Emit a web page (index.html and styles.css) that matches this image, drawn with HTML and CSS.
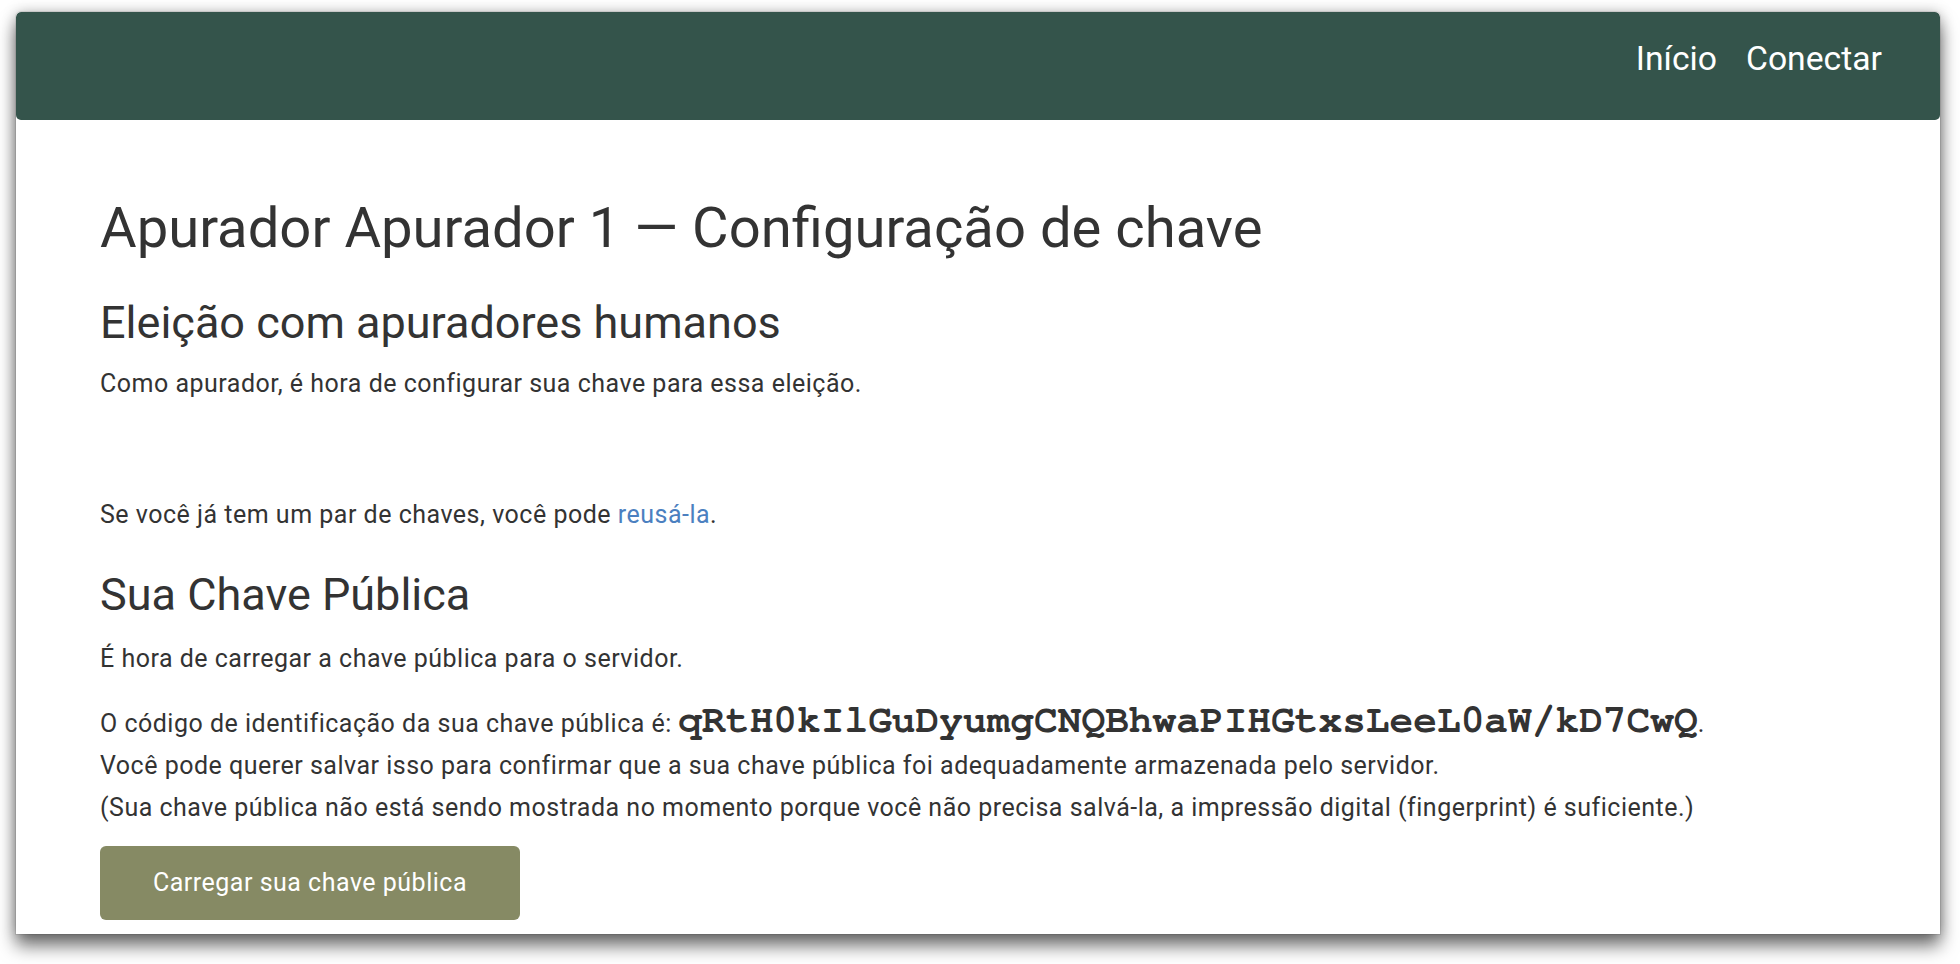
FILE: index.html
```html
<!DOCTYPE html>
<html lang="pt-BR">
<head>
<meta charset="utf-8">
<title>Configuração de chave</title>
<link rel="stylesheet" href="styles.css">
</head>
<body>
<div class="window">
  <nav class="navbar">
    <a class="nav-link" href="#">Início</a>
    <a class="nav-link" href="#">Conectar</a>
  </nav>
  <main class="content">
    <h1 class="title">Apurador Apurador 1 — Configuração de chave</h1>
    <h2 class="subtitle">Eleição com apuradores humanos</h2>
    <p class="text intro">Como apurador, é hora de configurar sua chave para essa eleição.</p>
    <p class="text reuse">Se você já tem um par de chaves, você pode <a class="link" href="#">reusá-la</a>.</p>
    <h3 class="section">Sua Chave Pública</h3>
    <p class="text upload">É hora de carregar a chave pública para o servidor.</p>
    <p class="text fingerprint">O código de identificação da sua chave pública é: <code class="code">qRtH0kIlGuDyumgCNQBhwaPIHGtxsLeeL0aW/kD7CwQ</code>.<br>Você pode querer salvar isso para confirmar que a sua chave pública foi adequadamente armazenada pelo servidor.<br>(Sua chave pública não está sendo mostrada no momento porque você não precisa salvá-la, a impressão digital (fingerprint) é suficiente.)</p>
    <button class="btn" type="button">Carregar sua chave pública</button>
  </main>
</div>
</body>
</html>
```

FILE: styles.css
```css
html, body {
  margin: 0;
  padding: 0;
  background: #ffffff;
}

body {
  font-family: Roboto, "Liberation Sans", Arial, sans-serif;
  color: #333333;
  height: 964px;
  overflow: hidden;
}

.window {
  margin: 12px 0 0 16px;
  width: 1924px;
  height: 922px;
  background: #ffffff;
  overflow: hidden;
  border-radius: 5px 5px 0 0;
  box-shadow: 0 0 0 1px rgba(0, 0, 0, 0.08), 0 12px 18px rgba(0, 0, 0, 0.55), 0 0 14px rgba(0, 0, 0, 0.25);
}

.navbar {
  height: 108px;
  background: #34544b;
  border-radius: 5px;
  display: flex;
  justify-content: flex-end;
  align-items: center;
  gap: 29px;
  padding: 0 58px 0 0;
  box-sizing: border-box;
}

.nav-link {
  color: #ffffff;
  text-decoration: none;
  font-size: 33.7px;
  line-height: 1;
  margin-bottom: 14px;
}

.content {
  padding: 78px 0 0 84px;
}

.title {
  margin: 0;
  font-size: 56.2px;
  font-weight: 400;
  line-height: 61.6px;
}

.subtitle {
  margin: 38px 0 0;
  font-size: 45px;
  font-weight: 400;
  line-height: 49.5px;
}

.section {
  margin: 37px 0 0;
  font-size: 45px;
  font-weight: 400;
  line-height: 49.5px;
}

.text {
  margin: 0;
  font-size: 25px;
  letter-spacing: 0.5px;
  line-height: 36px;
}

.intro {
  margin-top: 18.5px;
}

.reuse {
  margin-top: 95px;
}

.upload {
  margin-top: 22px;
}

.fingerprint {
  margin-top: 26px;
  line-height: 42px;
}

.link {
  color: #4b80c0;
  text-decoration: none;
}

.code {
  font-family: "Nimbus Mono PS", "Nimbus Mono L", FreeMono, "Liberation Mono", "Courier New", monospace;
  font-weight: 700;
  font-size: 39.5px;
  letter-spacing: 0;
  line-height: 0;
  color: #333333;
}

.btn {
  display: block;
  margin-top: 16.5px;
  width: 420px;
  height: 74px;
  background: #868a64;
  border: none;
  border-radius: 6px;
  color: #ffffff;
  font-family: Roboto, "Liberation Sans", Arial, sans-serif;
  font-size: 25px;
  letter-spacing: 0.5px;
  padding: 0;
}
```
